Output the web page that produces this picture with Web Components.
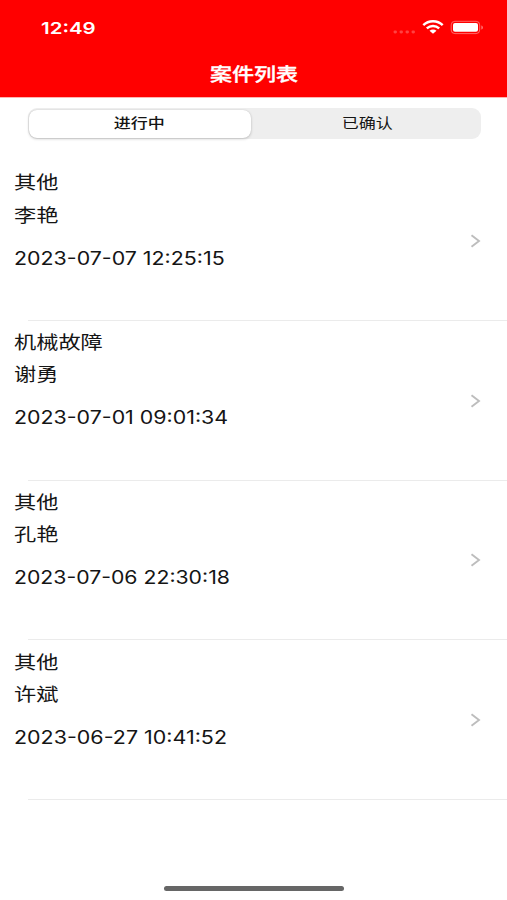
<!DOCTYPE html>
<html lang="zh-CN">
<head>
  <meta charset="utf-8">
  <title>案件列表</title>
  <style>
    body {
      margin: 0;
      background: #fff;
      font-family: Inter, "Noto Sans CJK SC", sans-serif;
      color: #151515;
    }
  </style>
</head>
<body>
  <case-app>
    <status-bar slot="header" time="12:49"></status-bar>
    <nav-bar slot="header">案件列表</nav-bar>
    <segment-control>
      <segment-item selected>进行中</segment-item>
      <segment-item>已确认</segment-item>
    </segment-control>
    <case-list>
      <case-row type="其他" name="李艳" date="2023-07-07 12:25:15" date-width="210.5"></case-row>
      <case-row type="机械故障" name="谢勇" date="2023-07-01 09:01:34" date-width="214"></case-row>
      <case-row type="其他" name="孔艳" date="2023-07-06 22:30:18" date-width="216"></case-row>
      <case-row type="其他" name="许斌" date="2023-06-27 10:41:52" date-width="213.5"></case-row>
    </case-list>
  </case-app>

  <script>
    class CaseApp extends HTMLElement {
      constructor() {
        super();
        this.attachShadow({mode: 'open'}).innerHTML = `
          <style>
            :host {
              display: flex;
              flex-direction: column;
              height: 900px;
              overflow: hidden;
            }

            header {
              box-sizing: border-box;
              height: 98px;
              background: #f00;
              border-bottom: 1px solid #ffb4b0;
              color: #fff;
            }

            main {
              flex: 1;
            }

            footer {
              display: flex;
              justify-content: center;
              padding: 0 0 9px 1px;
            }

            .home {
              width: 180px;
              height: 5px;
              border-radius: 3px;
              background: #666;
            }
          </style>
          <header><slot name="header"></slot></header>
          <main><slot></slot></main>
          <footer><div class="home"></div></footer>
        `;
      }
    }

    class StatusBar extends HTMLElement {
      constructor() {
        super();
        this.attachShadow({mode: 'open'}).innerHTML = `
          <style>
            :host {
              display: flex;
              align-items: center;
              justify-content: space-between;
              height: 55px;
              padding: 0 23px 0 41px;
            }

            span {
              display: inline-block;
              font-size: 16.5px;
              font-weight: 600;
              line-height: 20px;
              transform: scaleX(1.24);
              transform-origin: left;
            }
          </style>
          <span>${this.getAttribute('time')}</span>
          <svg width="92" height="16" viewBox="0 0 92 16">
            <g fill="#fff" fill-opacity=".26">
              <rect x="1.5" y="10.5" width="3.5" height="3" rx="1.4"/>
              <rect x="7.5" y="10.5" width="3.5" height="3" rx="1.4"/>
              <rect x="13.5" y="10.5" width="3.5" height="3" rx="1.4"/>
              <rect x="19.5" y="10.5" width="3.5" height="3" rx="1.4"/>
            </g>
            <g fill="none" stroke="#fff" stroke-width="2.4">
              <path d="M31.3 5.2C36.5 0 45.5 0 50.7 5.2"/>
              <path d="M34.8 8.4c3.5-3.2 8.9-3.2 12.4 0"/>
            </g>
            <path d="M37.5 10.7c2-1.7 5-1.7 7 0l-3.5 3.1z" fill="#fff"/>
            <rect x="59.2" y="1.3" width="28.5" height="12.3" rx="3.6" fill="none" stroke="#fff" stroke-opacity=".4"/>
            <rect x="61" y="3" width="25" height="8.8" rx="2" fill="#fff"/>
            <path d="M89.3 5.4c2.2.7 2.2 3.5 0 4.2z" fill="#fff" fill-opacity=".45"/>
          </svg>
        `;
      }
    }

    class NavBar extends HTMLElement {
      constructor() {
        super();
        this.attachShadow({mode: 'open'}).innerHTML = `
          <style>
            :host {
              display: flex;
              justify-content: center;
              padding-left: 2px;
              font-size: 18.5px;
              font-weight: 500;
              line-height: 39px;
            }

            span {
              transform: scaleX(1.19);
              -webkit-text-stroke: .35px #fff;
            }
          </style>
          <span><slot></slot></span>
        `;
      }
    }

    class SegmentControl extends HTMLElement {
      constructor() {
        super();
        this.attachShadow({mode: 'open'}).innerHTML = `
          <style>
            :host {
              display: grid;
              grid-template-columns: 1fr 1fr;
              box-sizing: border-box;
              height: 31px;
              margin: 10px 26.5px 0 27.5px;
              padding: 1.5px;
              border-radius: 9px;
              background: #eee;
            }
          </style>
          <slot></slot>
        `;
      }
    }

    class SegmentItem extends HTMLElement {
      constructor() {
        super();
        this.attachShadow({mode: 'open'}).innerHTML = `
          <style>
            :host {
              display: flex;
              align-items: center;
              justify-content: center;
              padding-left: 1.5px;
              border-radius: 8px;
              font-size: 14.2px;
              line-height: 20px;
            }

            :host([selected]) {
              margin-right: 3.5px;
              padding-left: 0;
              background: #fff;
              box-shadow: 0 1px 3px rgba(0, 0, 0, .2), 0 0 1px rgba(0, 0, 0, .15);
              font-weight: 500;
            }

            span {
              margin-top: -1px;
              transform: scaleX(1.2);
            }
          </style>
          <span><slot></slot></span>
        `;
      }
    }

    class CaseList extends HTMLElement {
      constructor() {
        super();
        this.attachShadow({mode: 'open'}).innerHTML = `
          <style>
            :host {
              display: block;
              margin-top: 22px;
            }
          </style>
          <slot></slot>
        `;
      }
    }

    class CaseRow extends HTMLElement {
      constructor() {
        super();
        this.attachShadow({mode: 'open'}).innerHTML = `
          <style>
            :host {
              display: grid;
              grid-template-rows: 1fr 1px;
              height: 159.75px;
            }

            .content {
              display: flex;
              align-items: center;
              justify-content: space-between;
              padding: 0 26px 0 13.5px;
            }

            .texts {
              align-self: flex-start;
              padding-top: 5.4px;
            }

            .line {
              width: max-content;
              font-size: 18.5px;
              line-height: 32.2px;
              white-space: nowrap;
              transform: scaleX(1.2);
              transform-origin: left;
            }

            .date {
              margin-top: 10.8px;
              font-size: 18.2px;
            }

            .separator {
              margin-left: 28px;
              background: #ebebeb;
            }

            svg {
              margin-top: 1px;
            }
          </style>
          <div class="content">
            <div class="texts">
              <div class="line">${this.getAttribute('type')}</div>
              <div class="line">${this.getAttribute('name')}</div>
              <div class="line date">${this.getAttribute('date')}</div>
            </div>
            <svg width="11" height="14" viewBox="0 0 11 14">
              <path d="M1.5 1.2 9 7l-7.5 5.8" fill="none" stroke="#bdbdbd" stroke-width="1.9"/>
            </svg>
          </div>
          <div class="separator"></div>
        `;
        this.fitDate();
      }

      // stretch the date line to its drawn width
      fitDate() {
        const date = this.shadowRoot.querySelector('.date');
        const scale = this.getAttribute('date-width') / date.offsetWidth;
        date.style.transform = `scaleX(${scale})`;
      }
    }

    window.customElements.define('case-app', CaseApp);
    window.customElements.define('status-bar', StatusBar);
    window.customElements.define('nav-bar', NavBar);
    window.customElements.define('segment-control', SegmentControl);
    window.customElements.define('segment-item', SegmentItem);
    window.customElements.define('case-list', CaseList);
    window.customElements.define('case-row', CaseRow);
  </script>
</body>
</html>
